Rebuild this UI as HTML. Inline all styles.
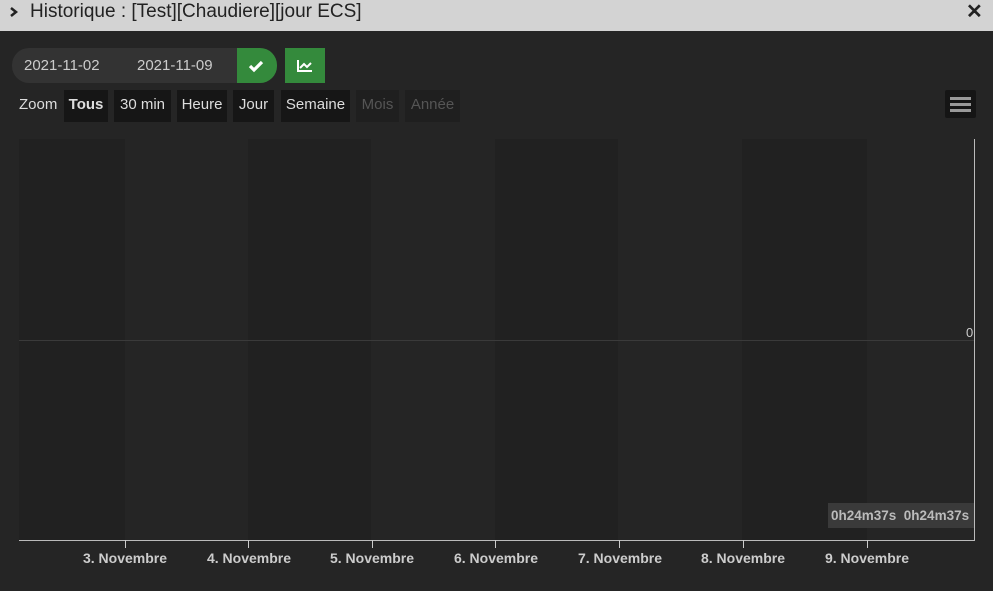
<!DOCTYPE html>
<html><head><style>
body{margin:0;width:993px;height:591px;background:#252525;font-family:"Liberation Sans",sans-serif;overflow:hidden;position:relative}
.hd{position:absolute;left:0;top:0;width:993px;height:31px;background:#d3d3d3;color:#222;font-size:19px;line-height:24px}
.a{position:absolute}
.btn{position:absolute;top:90px;height:32px;line-height:30px;font-size:15px;color:#ddd;background:#161616;text-align:center}
.dis{color:#555;background:#1f1f1f}
.band{position:absolute;top:139px;height:401px;background:#212121}
.lab{position:absolute;top:550px;font-size:14px;font-weight:bold;color:#ccc;transform:translateX(-50%);white-space:nowrap}
.tick{position:absolute;top:540px;width:1px;height:8px;background:#ccc}
</style></head><body>
<div class="hd"><svg class="a" style="left:8px;top:5px" width="12" height="14"><path d="M3 3l5 4-5 4" stroke="#222" stroke-width="2.5" fill="none"/></svg><span class="a" style="left:30px;top:0">Historique : [Test][Chaudiere][jour ECS]</span><span class="a" style="left:966px;top:0;font-weight:bold;font-size:20px">✕</span></div>
<div class="a" style="left:12px;top:48px;width:265px;height:35px;background:#333;border-radius:17px"></div>
<div class="a" style="left:24px;top:57px;color:#ccc;font-size:15px">2021-11-02</div>
<div class="a" style="left:137px;top:57px;color:#ccc;font-size:15px">2021-11-09</div>
<div class="a" style="left:237px;top:48px;width:40px;height:35px;background:#348a3c;border-radius:0 17px 17px 0"><svg width="40" height="35"><path d="M13 18l4 4 8-8" stroke="#fff" stroke-width="3.2" fill="none"/></svg></div>
<div class="a" style="left:285px;top:48px;width:40px;height:35px;background:#348a3c"><svg width="40" height="35"><path d="M13 12v11h14" stroke="#fff" stroke-width="2" fill="none"/><path d="M15 20l4-4 3 3 4-4" stroke="#fff" stroke-width="2" fill="none"/></svg></div>
<div class="a" style="left:19px;top:96px;color:#ddd;font-size:15px">Zoom</div>
<div class="btn" style="left:64px;width:44px;font-weight:bold">Tous</div>
<div class="btn" style="left:114px;width:57px">30 min</div>
<div class="btn" style="left:177px;width:50px">Heure</div>
<div class="btn" style="left:233px;width:41px">Jour</div>
<div class="btn" style="left:281px;width:69px">Semaine</div>
<div class="btn dis" style="left:356px;width:43px">Mois</div>
<div class="btn dis" style="left:405px;width:55px">Année</div>
<div class="a" style="left:945px;top:90px;width:31px;height:28px;background:#151515;border-radius:2px"><div class="a" style="left:5px;top:7px;width:21px;height:3px;background:#999"></div><div class="a" style="left:5px;top:13px;width:21px;height:3px;background:#999"></div><div class="a" style="left:5px;top:19px;width:21px;height:3px;background:#999"></div></div>
<div class="band" style="left:19px;width:106px"></div>
<div class="band" style="left:248px;width:123px"></div>
<div class="band" style="left:495px;width:123px"></div>
<div class="band" style="left:742px;width:125px"></div>
<div class="a" style="left:19px;top:340px;width:955px;height:1px;background:#3a3a3a"></div>
<div class="a" style="left:966px;top:325px;color:#ccc;font-size:13px">0</div>
<div class="a" style="left:974px;top:139px;width:1px;height:402px;background:#bbb"></div>
<div class="a" style="left:19px;top:540px;width:956px;height:1px;background:#bbb"></div>
<div class="a" style="left:828px;top:503px;width:146px;height:25px;background:#3a3a3a;color:#bbb;font-weight:bold;font-size:13.5px;line-height:25px;padding-left:3px;box-sizing:border-box;white-space:nowrap">0h24m37s&nbsp;&nbsp;0h24m37s</div>
<div class="tick" style="left:125px"></div><div class="tick" style="left:248px"></div><div class="tick" style="left:372px"></div><div class="tick" style="left:495px"></div><div class="tick" style="left:619px"></div><div class="tick" style="left:743px"></div><div class="tick" style="left:867px"></div>
<div class="lab" style="left:125px">3. Novembre</div><div class="lab" style="left:249px">4. Novembre</div><div class="lab" style="left:372px">5. Novembre</div><div class="lab" style="left:496px">6. Novembre</div><div class="lab" style="left:620px">7. Novembre</div><div class="lab" style="left:743px">8. Novembre</div><div class="lab" style="left:867px">9. Novembre</div>
</body></html>
